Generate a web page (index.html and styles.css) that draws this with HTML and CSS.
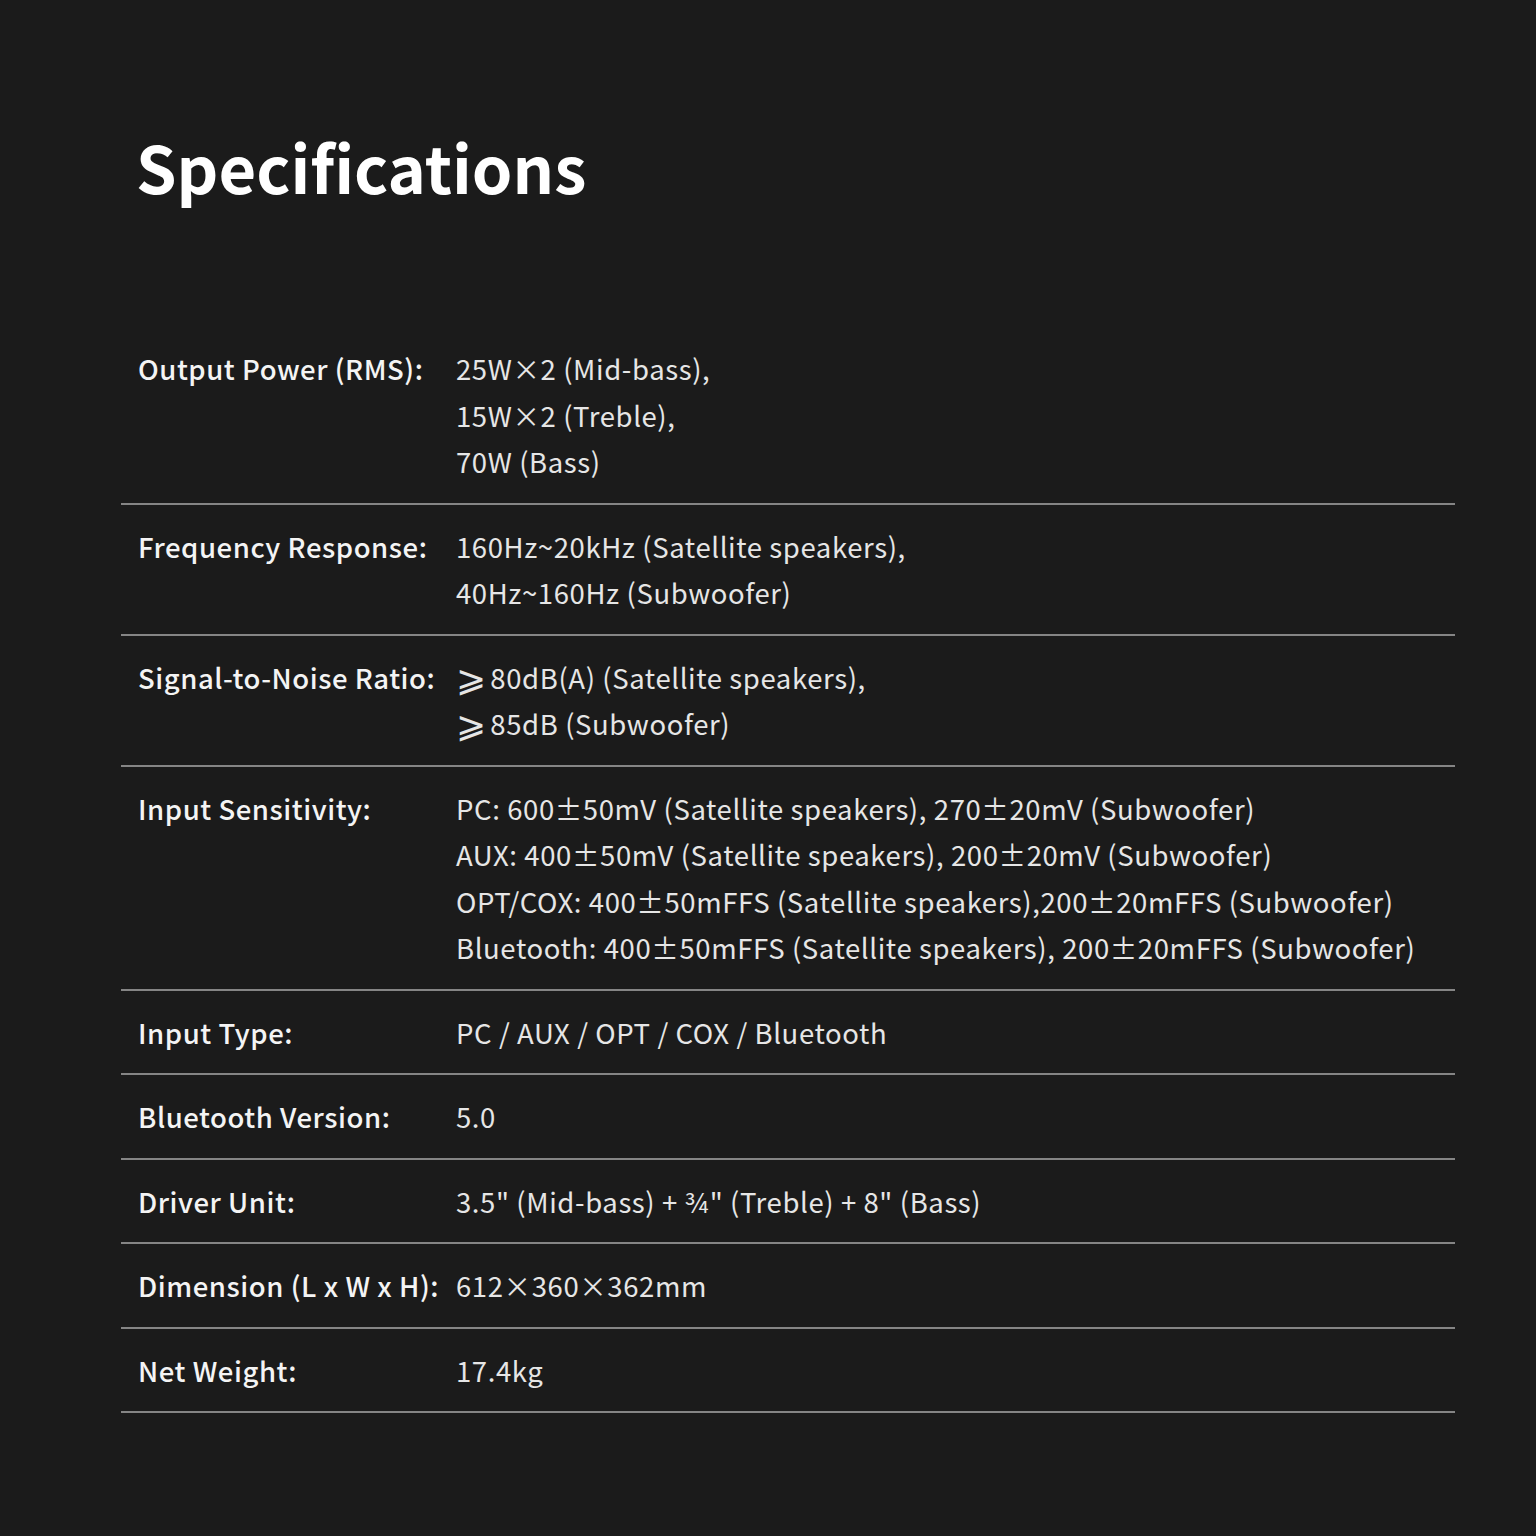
FILE: index.html
```html
<!DOCTYPE html>
<html lang="en">
<head>
<meta charset="utf-8">
<title>Specifications</title>
<link rel="stylesheet" href="styles.css">
</head>
<body>
<main class="page">
  <h1 class="title">Specifications</h1>
  <div class="specs">
    <div class="row">
      <div class="label">Output Power (RMS):</div>
      <div class="value">25W×2 (Mid-bass),<br>15W×2 (Treble),<br>70W (Bass)</div>
    </div>
    <div class="row">
      <div class="label">Frequency Response:</div>
      <div class="value">160Hz~20kHz (Satellite speakers),<br>40Hz~160Hz (Subwoofer)</div>
    </div>
    <div class="row">
      <div class="label">Signal-to-Noise Ratio:</div>
      <div class="value"><span class="ge">⩾</span> 80dB(A) (Satellite speakers),<br><span class="ge">⩾</span> 85dB (Subwoofer)</div>
    </div>
    <div class="row">
      <div class="label">Input Sensitivity:</div>
      <div class="value">PC: 600±50mV (Satellite speakers), 270±20mV (Subwoofer)<br>AUX: 400±50mV (Satellite speakers), 200±20mV (Subwoofer)<br>OPT/COX: 400±50mFFS (Satellite speakers),200±20mFFS (Subwoofer)<br>Bluetooth: 400±50mFFS (Satellite speakers), 200±20mFFS (Subwoofer)</div>
    </div>
    <div class="row">
      <div class="label">Input Type:</div>
      <div class="value">PC / AUX / OPT / COX / Bluetooth</div>
    </div>
    <div class="row">
      <div class="label">Bluetooth Version:</div>
      <div class="value">5.0</div>
    </div>
    <div class="row">
      <div class="label">Driver Unit:</div>
      <div class="value">3.5" (Mid-bass) + ¾" (Treble) + 8" (Bass)</div>
    </div>
    <div class="row">
      <div class="label">Dimension (L x W x H):</div>
      <div class="value">612×360×362mm</div>
    </div>
    <div class="row">
      <div class="label">Net Weight:</div>
      <div class="value">17.4kg</div>
    </div>
  </div>
</main>
</body>
</html>
```

FILE: styles.css
```css
html, body {
  margin: 0;
  padding: 0;
  background: #1b1b1b;
}
body {
  font-family: "Noto Sans CJK SC", "Noto Sans", sans-serif;
  color: #f2f2f2;
  width: 1536px;
  height: 1536px;
}
.page {
  padding: 118px 81px 0 121px;
}
.title {
  margin: 0 0 0 15px;
  font-size: 65px;
  line-height: 96px;
  font-weight: 700;
  color: #ffffff;
}
.specs {
  margin-top: 113px;
  width: 1334px;
}
.row {
  display: grid;
  grid-template-columns: 318px 1fr;
  padding: 18px 0 18px 17px;
  border-bottom: 2px solid #858585;
  font-size: 27.5px;
  line-height: 46.5px;
}
.label {
  font-weight: 500;
  color: #f4f4f4;
  letter-spacing: 0.55px;
}
.value {
  font-weight: 400;
  color: #e6e6e6;
  letter-spacing: 0.6px;
}
.ge {
  display: inline-block;
  font-size: 1.3em;
  line-height: 1;
  vertical-align: -2px;
  margin-right: -3px;
}
```
